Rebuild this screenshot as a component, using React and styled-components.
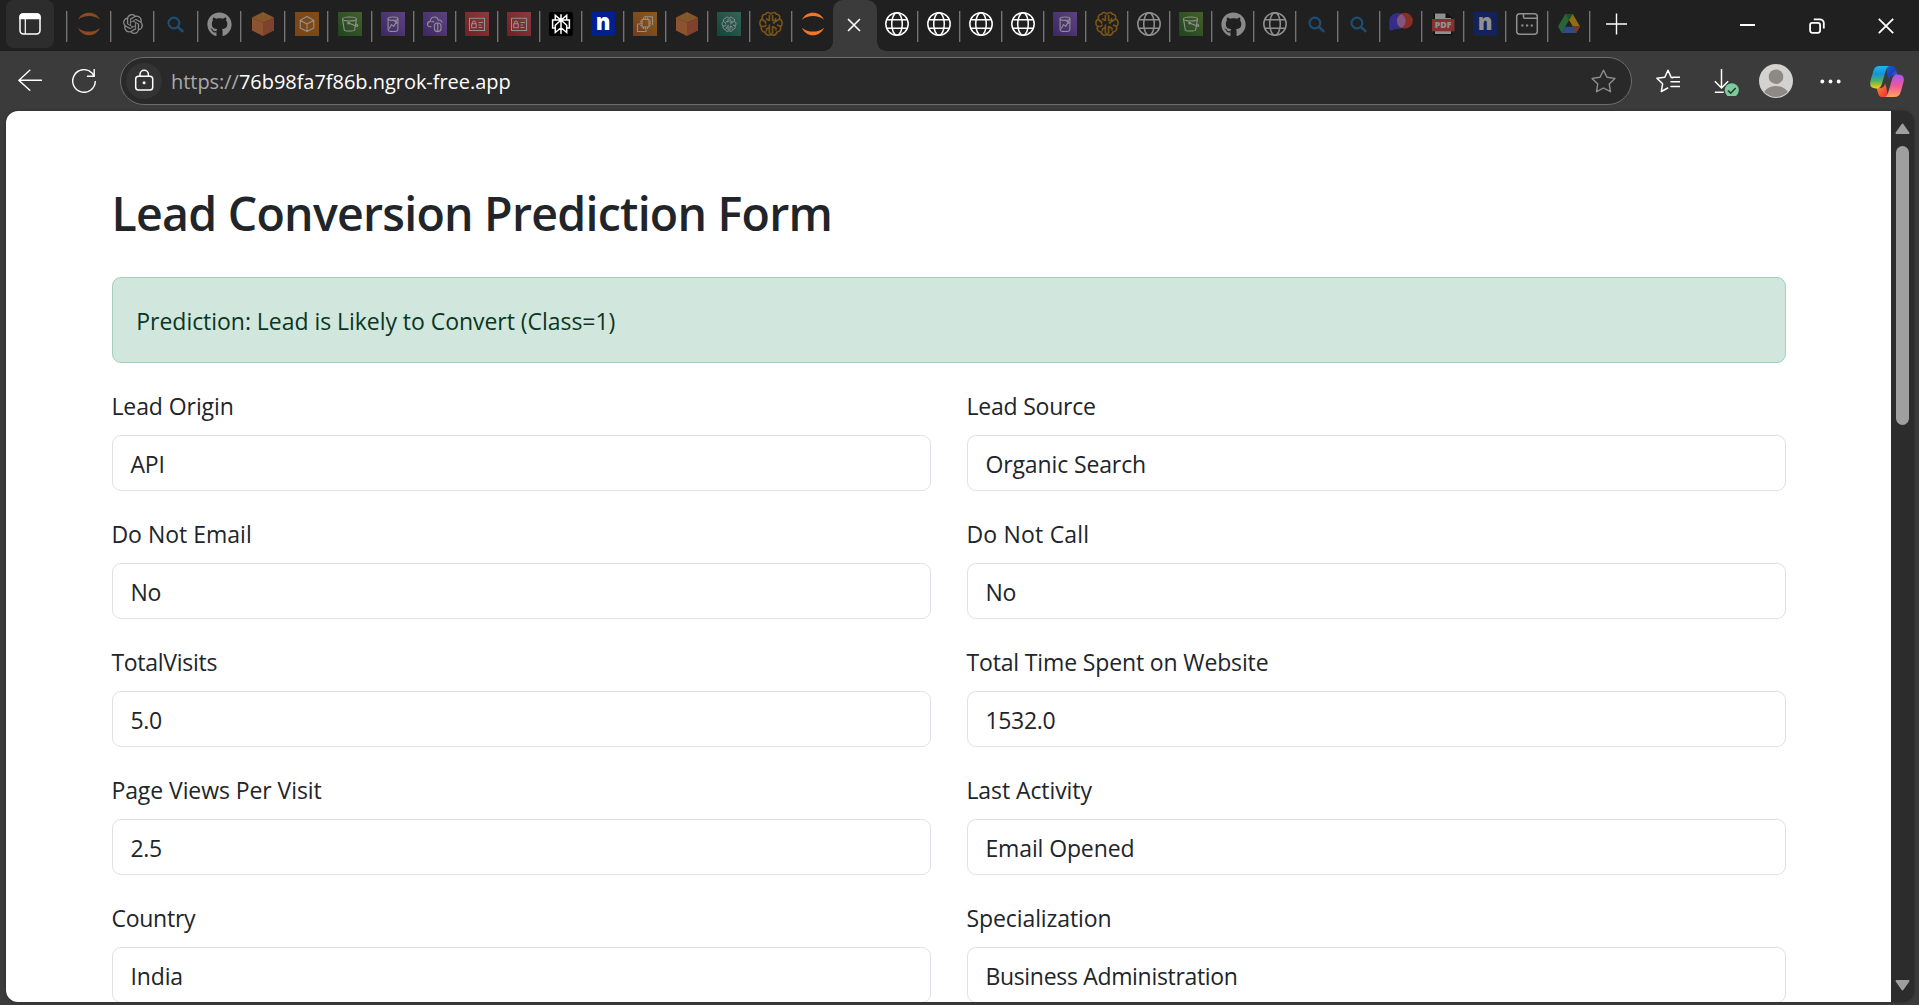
import React from 'react';
import styled, { createGlobalStyle, css } from 'styled-components';
import { FaGithub } from 'react-icons/fa';
import { SiOpenai } from 'react-icons/si';

const GlobalStyle = createGlobalStyle`
  *, *::before, *::after { box-sizing: border-box; }
  body {
    margin: 0;
    background: #3b3b3b;
    font-family: "Open Sans", "Noto Sans", sans-serif;
  }
`;

const Window = styled.div`
  display: flex;
  flex-direction: column;
  width: 1919px;
  height: 1005px;
  overflow: hidden;
  background: #3b3b3b;
`;

/* ---------- tab strip ---------- */

const TabStrip = styled.div`
  display: flex;
  flex: none;
  height: 51px;
  padding-left: 6px;
  background: #202020;
`;

const WorkspaceButton = styled.div`
  display: flex;
  align-items: center;
  justify-content: center;
  width: 48px;
  height: 48px;
  margin-right: 12px;
  border-radius: 8px;
  background: #2d2d2d;
`;

const Tab = styled.div`
  display: flex;
  align-items: center;
  justify-content: center;
  flex: none;
  width: ${(p) => p.$width}px;
  height: 48px;
  ${(p) =>
    p.$divided &&
    css`
      padding-left: 2px;
      background: linear-gradient(90deg, #747474 1px, #3e3e3e 1px) 0 11px / 2px 31px no-repeat;
    `}
  svg {
    flex: none;
    display: block;
    overflow: visible;
    opacity: ${(p) => (p.$asleep ? 0.5 : 1)};
  }
`;

const ActiveTab = styled.div`
  position: relative;
  display: flex;
  align-items: center;
  justify-content: center;
  flex: none;
  width: 44px;
  height: 51px;
  padding: 0 2px 2px 0;
  border-radius: 10px 10px 0 0;
  background: #3b3b3b;
  &::before,
  &::after {
    content: '';
    position: absolute;
    bottom: 0;
    width: 9px;
    height: 9px;
  }
  &::before {
    left: -9px;
    background: radial-gradient(circle at 0 0, transparent 8.5px, #3b3b3b 9px);
  }
  &::after {
    right: -9px;
    background: radial-gradient(circle at 100% 0, transparent 8.5px, #3b3b3b 9px);
  }
`;

const WindowControls = styled.div`
  display: flex;
  margin-left: auto;
  margin-right: -1px;
`;

const ControlButton = styled.div`
  display: flex;
  align-items: center;
  justify-content: center;
  width: 69px;
  height: 51px;
`;

/* ---------- toolbar ---------- */

const Toolbar = styled.div`
  display: flex;
  align-items: center;
  flex: none;
  height: 60px;
  padding: 0 15px 0 18px;
  svg { display: block; flex: none; }
`;

const ToolSlot = styled.div`
  flex: none;
  margin-left: ${(p) => p.$gap || 0}px;
`;

const AddressBar = styled.div`
  display: flex;
  align-items: center;
  flex: 1;
  height: 48px;
  margin-left: 24px;
  padding: 0 15px 0 5px;
  border: 1px solid #6c6c6c;
  border-radius: 24px;
  background: #292929;
`;

const LockBadge = styled.div`
  display: flex;
  align-items: center;
  justify-content: center;
  width: 36px;
  height: 36px;
  border-radius: 50%;
  background: #333333;
`;

const Url = styled.div`
  flex: 1;
  margin-left: 9px;
  padding-top: 2px;
  font-size: 20px;
  line-height: 28px;
  letter-spacing: -0.04px;
  color: #ffffff;
`;

const Scheme = styled.span`
  color: #a9a9a9;
`;

/* ---------- page ---------- */

const Viewport = styled.div`
  display: flex;
  flex: none;
  width: 1908px;
  height: 891px;
  margin-left: 6px;
  border-radius: 12px;
  overflow: hidden;
  background: #2c2c2c;
  box-shadow: 0 0 3px rgba(0, 0, 0, 0.35);
`;

const Page = styled.main`
  width: 1885px;
  height: 891px;
  padding: 72px 105px 0 106px;
  overflow: hidden;
  background: #ffffff;
`;

const Heading = styled.h1`
  height: 58px;
  margin: 0 0 36px;
  font-size: 46.5px;
  font-weight: 600;
  line-height: 61px;
  letter-spacing: -0.76px;
  text-indent: -0.5px;
  white-space: nowrap;
  color: #212529;
`;

const Alert = styled.div`
  height: 86px;
  margin-bottom: 24px;
  padding: 24px;
  border: 1px solid #a3cfbb;
  border-radius: 9px;
  background: #d1e7dd;
  font-size: 23px;
  line-height: 38px;
  letter-spacing: -0.04px;
  text-indent: -0.7px;
  color: #0a3622;
`;

const FormGrid = styled.div`
  display: grid;
  grid-template-columns: 819px 819px;
  column-gap: 36px;
  row-gap: 24px;
`;

const Field = styled.div`
  display: flex;
  flex-direction: column;
  gap: 12px;
`;

const Label = styled.div`
  height: 36px;
  font-size: 23px;
  line-height: 38px;
  text-indent: -0.6px;
  letter-spacing: ${(p) => p.$tracking ?? -0.08}px;
  color: #212529;
`;

const Control = styled.div`
  height: 56px;
  padding: 9px 18px;
  border: 1px solid #dee2e6;
  border-radius: 9px;
  background: #ffffff;
  font-size: 23px;
  line-height: 38px;
  text-indent: -0.6px;
  letter-spacing: ${(p) => p.$tracking ?? -0.12}px;
  color: #212529;
`;

const ScrollTrack = styled.div`
  display: flex;
  flex-direction: column;
  align-items: center;
  width: 23px;
  padding: 12px 0 11px;
  background: #2c2c2c;
  svg { display: block; flex: none; }
`;

const ScrollThumb = styled.div`
  width: 13px;
  height: 279px;
  margin: 12px 0 auto;
  border-radius: 7px;
  background: #9f9f9f;
`;

/* ---------- icons ---------- */

const Icon = ({ size = 24, children, ...rest }) => (
  <svg width={size} height={size} viewBox="0 0 24 24" fill="none" {...rest}>
    {children}
  </svg>
);

const Jupyter = () => (
  <Icon fill="#f37726">
    <path d="M.9 7.8C3.1 3.2 7.2.7 12 .7s8.900 2.500 11.100 7.100C20 5 16.200 3.900 12 3.900S4 5 .9 7.800Z" />
    <path d="M.9 15.700C3.100 20.300 7.200 23.300 12 23.300s8.900-3 11.100-7.600C20 18.500 16.200 19.600 12 19.600S4 18.500.9 15.700Z" />
  </Icon>
);

const Search = () => (
  <Icon stroke="#1c7cc8" strokeWidth="2.100">
    <circle cx="9.900" cy="11" r="5.400" />
    <path d="m13.800 14.900 5.300 5" strokeWidth="2.600" />
  </Icon>
);

const Cube = () => (
  <Icon>
    <path d="M12 0 23 5.500 12 11 1 5.500Z" fill="#e88f35" />
    <path d="M1 5.500 12 11v13L1 18.500Z" fill="#f9853f" />
    <path d="M23 5.500 12 11v13l11-5.500Z" fill="#e2653a" />
  </Icon>
);

const Tile = ({ from, to, children, id }) => (
  <Icon stroke="#ffffff" strokeWidth="1.100" strokeLinejoin="round">
    <defs>
      <linearGradient id={id} x1="0" y1="1" x2="1" y2="0">
        <stop stopColor={from} />
        <stop offset="1" stopColor={to} />
      </linearGradient>
    </defs>
    <path d="M0 0h24v24H0z" fill={`url(#${id})`} stroke="none" />
    {children}
  </Icon>
);

const BoxTile = () => (
  <Tile id="box" from="#d86a0a" to="#e07a10">
    <path d="m12 4.500 6.800 3.700v7.700L12 19.600l-6.800-3.700V8.200ZM5.200 8.200 12 12l6.800-3.800M12 12v7.600" />
  </Tile>
);

const BucketTile = () => (
  <Tile id="bucket" from="#1f6a1c" to="#6aa03a">
    <path d="M4.500 7.200 6.300 18c.2 1.400 10 1.400 10.300 0l1.900-10.800" />
    <ellipse cx="11.500" cy="7" rx="7" ry="2" />
    <path d="m10.500 11 8.800 3.400c.8-.6.500-1.400-1-2.400" />
    <circle cx="10.600" cy="11.200" r=".8" fill="#fff" />
  </Tile>
);

const CylinderTile = () => (
  <Tile id="cylinder" from="#5a2ca8" to="#9a68e0">
    <ellipse cx="12" cy="6.700" rx="4.900" ry="1.700" />
    <path d="M7.100 6.700v11.100c0 2.300 9.800 2.300 9.800 0V6.700M8.300 16.800l2.200-4.200 2.200 1.800 2.800-4.700M13.300 9.500h2.300v2.300" />
  </Tile>
);

const CloudTile = () => (
  <Tile id="cloud" from="#5a2ca8" to="#9a68e0">
    <path d="M8.500 14.800H7.300c-3.900-.3-3.600-5 0-5.400C7.600 4 14.300 3.600 15.300 8.200c2.500-.6 3.700.9 3.700 2.600M8.500 9.600c1.400-.4 2.200.1 2.600.8" />
    <rect x="11.400" y="11" width="6.600" height="8.600" rx="3" />
    <path d="M14.700 11v8.600" />
  </Tile>
);

const IdTile = () => (
  <Tile id="badge" from="#c41e2c" to="#f05a5a">
    <path d="M4.500 6.300h15v12.200h-15zM6.700 11.800h4.500v3.900H6.700zM7.600 11.600v-1.200c0-1.800 2.700-1.800 2.700 0v1.200M13.500 10.500H18M13.500 13h2.600M13.500 15.500h3.800" />
  </Tile>
);

const ChipTile = () => (
  <Tile id="chip" from="#c8561a" to="#f09a20">
    <path d="M9 7.500h7v7.500H9zM10.500 7.500V5.500m2 2v-2m2 2v-2M10.500 17v-2m2 2v-2m2 2v-2M7 9.300h2m-2 2h2m-2 2h2m7-4h2m-2 2h2m-2 2h2" />
    <path d="M11 4.800h8.500v8M7 12H4.500v7.500H13v-2.200" />
  </Tile>
);

const BrainPaths = () => (
  <path d="M12 2.500C11 0 7.300-.2 6.600 2.300 4 2 2.600 4.500 3.500 7 .3 8 .1 13 2.500 14.500c-1 3 1 5.500 3.700 5.500.6 3.600 5 4.200 5.800 1.500 .8 2.700 5.200 2.100 5.800-1.500 2.700 0 4.700-2.500 3.700-5.500 2.400-1.500 2.200-6.500-1-7.500.9-2.500-.5-5-3.100-4.700C16.700-.2 13 0 12 2.500M10.400 3v5.500L7 6.800M13.600 3v5.500h3V6M3.500 7c.4 1.600 1.500 2.300 3 2.300v2.500M2.500 14.500h3.300l1.700-1.700M10.400 21.500v-9M10.400 15.500 7.500 17v2.200M13.600 21.500v-7l3.400 1.700v2.300M20.500 7 17 9.300l-3.200 2.200M21.500 14.500 18 12.800" />
);

const Brain = () => (
  <Icon stroke="#d68910" strokeWidth="1.600" strokeLinejoin="round">
    <BrainPaths />
  </Icon>
);

const BrainTile = () => (
  <Tile id="brain" from="#0a6a52" to="#4aa890">
    <g transform="translate(4.500 4.800) scale(.63)" strokeWidth="1.500">
      <BrainPaths />
    </g>
  </Tile>
);

const LetterTile = ({ bg }) => (
  <Icon>
    <path d="M0 0h24v24H0z" fill={bg} />
    <text x="12" y="18.200" textAnchor="middle" fontFamily="Open Sans, sans-serif" fontWeight="800" fontSize="22" fill="#fff">
      n
    </text>
  </Icon>
);

const PerplexityTile = () => (
  <Icon stroke="#fff" strokeWidth="1.500">
    <rect width="24" height="24" rx="2" fill="#000" stroke="none" />
    <path d="M6.300 8V3.300L12 8l5.700-4.700V8M6.300 16H3.600V8h16.800v8h-2.700M12 2.300v19.400M12 8l-5.700 5.300v7.200L12 15.700l5.700 4.800v-7.200Z" />
  </Icon>
);

const Globe = () => (
  <Icon stroke="#ffffff" strokeWidth="1.500">
    <circle cx="12" cy="12" r="11.200" />
    <ellipse cx="12" cy="12" rx="5.300" ry="11.200" />
    <path d="M1.700 7.700h20.600M1.700 16.300h20.600" />
  </Icon>
);

const Bubbles = () => (
  <Icon>
    <path d="M8.500 1C13 1 16.500 4.500 16.500 9s-3.500 8-8 8c-2 0-3 0-4.500 1.200C2.500 18.700.500 18.500.300 17V9.500C.300 4.500 4 1 8.500 1Z" fill="#4a3cf0" />
    <circle cx="15.800" cy="8.700" r="8" fill="#f03c28" />
    <path d="M12.300 1.900a8 8 0 0 1 0 14.200 8 8 0 0 1 0-14.200Z" fill="#e08ae0" />
  </Icon>
);

const Pdf = () => (
  <Icon>
    <path d="M2.500 1h13.500l5.500 5.500v17h-19z" fill="#050505" />
    <path d="M4 1.500h10.500v4.500H20v16H4z" fill="#ffffff" />
    <path d="M1 7h22.500v12.300H1z" fill="#f03e40" />
    <text x="12.200" y="16.300" textAnchor="middle" fontFamily="Open Sans, sans-serif" fontWeight="800" fontSize="8.800" fill="#fff">
      PDF
    </text>
  </Icon>
);

const TabPage = () => (
  <Icon stroke="#ffffff" strokeWidth="1.500">
    <rect x="1.700" y="1.700" width="20.600" height="20.600" rx="3" />
    <path d="M8.500 2v3c0 .8.500 1.300 1.300 1.300H22" />
    <path d="M6.300 13.500h2.200M11 13.500h2.200M15.700 13.500h2.200" strokeWidth="2.200" />
  </Icon>
);

const Drive = () => (
  <Icon>
    <path d="M8.300 2h7.400L12 8.500 4.800 21 1 14.500Z" fill="#2fa84f" />
    <path d="M8.300 2h7.400L23 14.500h-7.300Z" fill="#ffba00" />
    <path d="M8.300 2h7.400L12 8.500Z" fill="#188038" />
    <path d="M8.500 14.500H23L19.200 21H4.800Z" fill="#3a77e8" />
    <path d="M15.700 14.500H23L19.200 21Z" fill="#ea4335" />
    <path d="m12 8.500 3.600 6H8.500Z" fill="#202020" />
  </Icon>
);

const WorkspaceIcon = () => (
  <Icon stroke="#fff" strokeWidth="1.500">
    <rect x="2" y="2" width="20" height="20" rx="3.500" />
    <path d="M2 6.500V5a3 3 0 0 1 3-3h14a3 3 0 0 1 3 3v1.500z" fill="#fff" />
    <path d="M7.300 6v16" strokeWidth="1.200" />
  </Icon>
);

const BackIcon = () => (
  <svg width="24" height="24" viewBox="0 0 24 24" fill="none" stroke="#fff" strokeWidth="1.400" strokeLinecap="round">
    <path d="M.9 11.300h22.500M11.800 1.300.9 11.300l10.900 10" />
  </svg>
);

const ReloadIcon = () => (
  <svg width="24" height="24" viewBox="0 0 24 24" fill="none" stroke="#fff" strokeWidth="1.400">
    <path d="M23.300 12A11.300 11.300 0 1 1 20 4l2.200 3M22.200 0v7.300h-7.300" />
  </svg>
);

const LockIcon = () => (
  <svg width="24" height="24" viewBox="0 0 24 24" fill="none" stroke="#fff" strokeWidth="1.500">
    <rect x="3.700" y="7.200" width="17" height="13.800" rx="2.800" />
    <path d="M8 7V5.500a4.200 4.200 0 0 1 8.400 0V7" />
    <circle cx="12.100" cy="13.700" r="1.500" fill="#fff" stroke="none" />
  </svg>
);

const StarIcon = () => (
  <svg width="25" height="24" viewBox="0 0 25 24" fill="none" stroke="#8f8f8f" strokeWidth="1.400" strokeLinejoin="round">
    <path d="m12.500 1.200 3.500 7 7.900 1.200-5.700 5.500 1.300 7.800-7-3.700-7 3.700 1.300-7.800L1.100 9.400 9 8.200Z" />
  </svg>
);

const FavoritesIcon = () => (
  <svg width="24" height="24" viewBox="0 0 24 24" fill="none" stroke="#fff" strokeWidth="1.500" strokeLinejoin="round" strokeLinecap="round">
    <path d="M16.700 8.700 15.200 8.400 12 1.300 8.800 8.300.9 9.300l5.700 5.500-1.300 7.700 6.400-3.500" />
    <path d="M15 12.700h8.600M15 17.500h8.600M16.700 8.200h6.900" />
  </svg>
);

const DownloadIcon = () => (
  <svg width="26" height="30" viewBox="0 0 26 30" fill="none" stroke="#fff" strokeWidth="1.500">
    <path d="M8.500 3v19M1.800 15.300l6.700 6.700 6.700-6.700M1.800 26.300h9" />
    <circle cx="18.800" cy="24.300" r="7" fill="#7dcb9b" stroke="none" />
    <path d="m15 24.500 2.700 2.700 5-5.200" stroke="#26382d" strokeWidth="1.600" />
  </svg>
);

const Avatar = () => (
  <svg width="34" height="34" viewBox="0 0 34 34">
    <defs>
      <clipPath id="avatarClip">
        <circle cx="17" cy="17" r="16" />
      </clipPath>
    </defs>
    <circle cx="17" cy="17" r="17" fill="#d4d2cf" />
    <circle cx="17" cy="12.700" r="7.300" fill="#8d8986" />
    <ellipse cx="17" cy="32.500" rx="13" ry="10.500" fill="#8d8986" clipPath="url(#avatarClip)" />
  </svg>
);

const DotsIcon = () => (
  <svg width="21" height="6" viewBox="0 0 21 6" fill="#fff">
    <circle cx="2.300" cy="3.500" r="1.900" />
    <circle cx="10.500" cy="3.500" r="1.900" />
    <circle cx="18.700" cy="3.500" r="1.900" />
  </svg>
);

const CopilotIcon = () => (
  <svg width="34" height="31" viewBox="0 0 34 31">
    <defs>
      <linearGradient id="cpLeft" x1="0" y1="0" x2="0" y2="1">
        <stop stopColor="#22b4f0" />
        <stop offset=".35" stopColor="#1692d8" />
        <stop offset=".65" stopColor="#4cb06a" />
        <stop offset="1" stopColor="#ffd000" />
      </linearGradient>
      <linearGradient id="cpRight" x1="0" y1="0" x2="0" y2="1">
        <stop stopColor="#a855f0" />
        <stop offset=".5" stopColor="#f0569c" />
        <stop offset="1" stopColor="#ffa45c" />
      </linearGradient>
      <linearGradient id="cpTop" x1="0" y1="0" x2="1" y2="1">
        <stop stopColor="#0f6ad8" />
        <stop offset=".5" stopColor="#1c3fc0" />
        <stop offset="1" stopColor="#2f8cf5" />
      </linearGradient>
      <linearGradient id="cpBottom" x1="0" y1="0" x2="1" y2="1">
        <stop stopColor="#ff8a3a" />
        <stop offset="1" stopColor="#e83030" />
      </linearGradient>
    </defs>
    <path d="M16 0h6c2.300 0 3.300 1.500 4 4l1.500 5H24c-3 0-4.300 1.500-5.200 4.500L17.500 9Z" fill="url(#cpTop)" />
    <path d="M18 31h-6c-2.300 0-3.300-1.500-4-4l-1.500-5H10c3 0 4.300-1.500 5.200-4.500L16.500 22Z" fill="url(#cpBottom)" />
    <path d="M9.500 0H20c-2 0-3.300 1.500-4.200 4.500L12 17.500c-1.200 3.800-2.800 5-6 5C1 22.500-.8 19.700.6 14.500L3.300 5C4.300 1.500 6.200 0 9.500 0Z" fill="url(#cpLeft)" />
    <path d="M24.500 31H14c2 0 3.300-1.500 4.200-4.500L22 13.500c1.200-3.800 2.800-5 6-5 5 0 6.800 2.800 5.400 8L30.700 26c-1 3.500-2.900 5-6.200 5Z" fill="url(#cpRight)" />
  </svg>
);

const Github = () => <FaGithub size={25} color="#f4f4f4" />;
const OpenAi = () => <SiOpenai size={20} color="#f0f0f0" />;

const leftTabs = [
  [44, Jupyter, true],
  [43, OpenAi, true],
  [44, Search, true],
  [43, Github, true],
  [44, Cube, true],
  [43, BoxTile, true],
  [44, BucketTile, true],
  [42, CylinderTile, true],
  [42, CloudTile, true],
  [42, IdTile, true],
  [42, IdTile, true],
  [42, PerplexityTile, false],
  [42, () => <LetterTile bg="#00208f" />, false],
  [42, ChipTile, true],
  [42, Cube, true],
  [42, BrainTile, true],
  [42, Brain, true],
  [42, Jupyter, false],
];

const rightTabs = [
  [Globe, false],
  [Globe, false],
  [Globe, false],
  [CylinderTile, true],
  [Brain, true],
  [Globe, true],
  [BucketTile, true],
  [Github, true],
  [Globe, true],
  [Search, true],
  [Search, true],
  [Bubbles, true],
  [Pdf, true],
  [() => <LetterTile bg="#0a2496" />, true],
  [TabPage, true],
  [Drive, true],
];

const fields = [
  { label: 'Lead Origin', value: 'API' },
  { label: 'Lead Source', value: 'Organic Search', labelTracking: -0.2 },
  { label: 'Do Not Email', value: 'No', labelTracking: 0 },
  { label: 'Do Not Call', value: 'No', labelTracking: 0.2 },
  { label: 'TotalVisits', value: '5.0', labelTracking: -0.28, valueTracking: -0.3 },
  { label: 'Total Time Spent on Website', value: '1532.0', labelTracking: -0.14, valueTracking: -0.3 },
  { label: 'Page Views Per Visit', value: '2.5', valueTracking: -0.3 },
  { label: 'Last Activity', value: 'Email Opened' },
  { label: 'Country', value: 'India', labelTracking: -0.25 },
  { label: 'Specialization', value: 'Business Administration', valueTracking: -0.32 },
];

export default function App() {
  return (
    <Window>
      <GlobalStyle />
      <TabStrip>
        <WorkspaceButton>
          <WorkspaceIcon />
        </WorkspaceButton>
        {leftTabs.map(([width, Glyph, asleep], i) => (
          <Tab key={i} $width={width} $asleep={asleep} $divided>
            <Glyph />
          </Tab>
        ))}
        <ActiveTab>
          <svg width="14" height="14" viewBox="0 0 14 14" stroke="#fff" strokeWidth="1.600">
            <path d="m1 1 12 12M13 1 1 13" />
          </svg>
        </ActiveTab>
        <Tab $width={40}>
          <Globe />
        </Tab>
        {rightTabs.map(([Glyph, asleep], i) => (
          <Tab key={i} $width={42} $asleep={asleep} $divided>
            <Glyph />
          </Tab>
        ))}
        <Tab $width={53} $divided>
          <svg width="21" height="23" viewBox="0 0 21 23" stroke="#fff" strokeWidth="1.400">
            <path d="M0 11h21M10.500.5v21" />
          </svg>
        </Tab>
        <WindowControls>
          <ControlButton>
            <svg width="15" height="15" viewBox="0 0 15 15">
              <path d="M0 6h15v2H0z" fill="#fff" />
            </svg>
          </ControlButton>
          <ControlButton>
            <svg width="16" height="16" viewBox="0 0 16 16" fill="none" stroke="#fff" strokeWidth="1.800">
              <rect x="1.100" y="4.800" width="10" height="10" rx="2.200" />
              <path d="M4.800 1.300h6a4 4 0 0 1 4 4v5.200" />
            </svg>
          </ControlButton>
          <ControlButton>
            <svg width="16" height="16" viewBox="0 0 16 16" stroke="#fff" strokeWidth="1.800">
              <path d="m.8.800 14.400 14.400M15.200.8.8 15.200" />
            </svg>
          </ControlButton>
        </WindowControls>
      </TabStrip>

      <Toolbar>
        <ToolSlot><BackIcon /></ToolSlot>
        <ToolSlot $gap={30}><ReloadIcon /></ToolSlot>
        <AddressBar>
          <LockBadge><LockIcon /></LockBadge>
          <Url><Scheme>https://</Scheme>76b98fa7f86b.ngrok-free.app</Url>
          <StarIcon />
        </AddressBar>
        <ToolSlot $gap={24}><FavoritesIcon /></ToolSlot>
        <ToolSlot $gap={33}><DownloadIcon /></ToolSlot>
        <ToolSlot $gap={20}><Avatar /></ToolSlot>
        <ToolSlot $gap={27}><DotsIcon /></ToolSlot>
        <ToolSlot $gap={29}><CopilotIcon /></ToolSlot>
      </Toolbar>

      <Viewport>
        <Page>
          <Heading>Lead Conversion Prediction Form</Heading>
          <Alert>Prediction: Lead is Likely to Convert (Class=1)</Alert>
          <FormGrid>
            {fields.map((f) => (
              <Field key={f.label}>
                <Label $tracking={f.labelTracking}>{f.label}</Label>
                <Control $tracking={f.valueTracking}>{f.value}</Control>
              </Field>
            ))}
          </FormGrid>
        </Page>
        <ScrollTrack>
          <svg width="15" height="11" viewBox="0 0 15 11" fill="#9f9f9f" stroke="#9f9f9f" strokeWidth="2" strokeLinejoin="round">
            <path d="M7.500 1.500 13.500 10h-12Z" />
          </svg>
          <ScrollThumb />
          <svg width="15" height="11" viewBox="0 0 15 11" fill="#9f9f9f" stroke="#9f9f9f" strokeWidth="2" strokeLinejoin="round">
            <path d="M7.500 9.500 1.500 1h12Z" />
          </svg>
        </ScrollTrack>
      </Viewport>
    </Window>
  );
}
